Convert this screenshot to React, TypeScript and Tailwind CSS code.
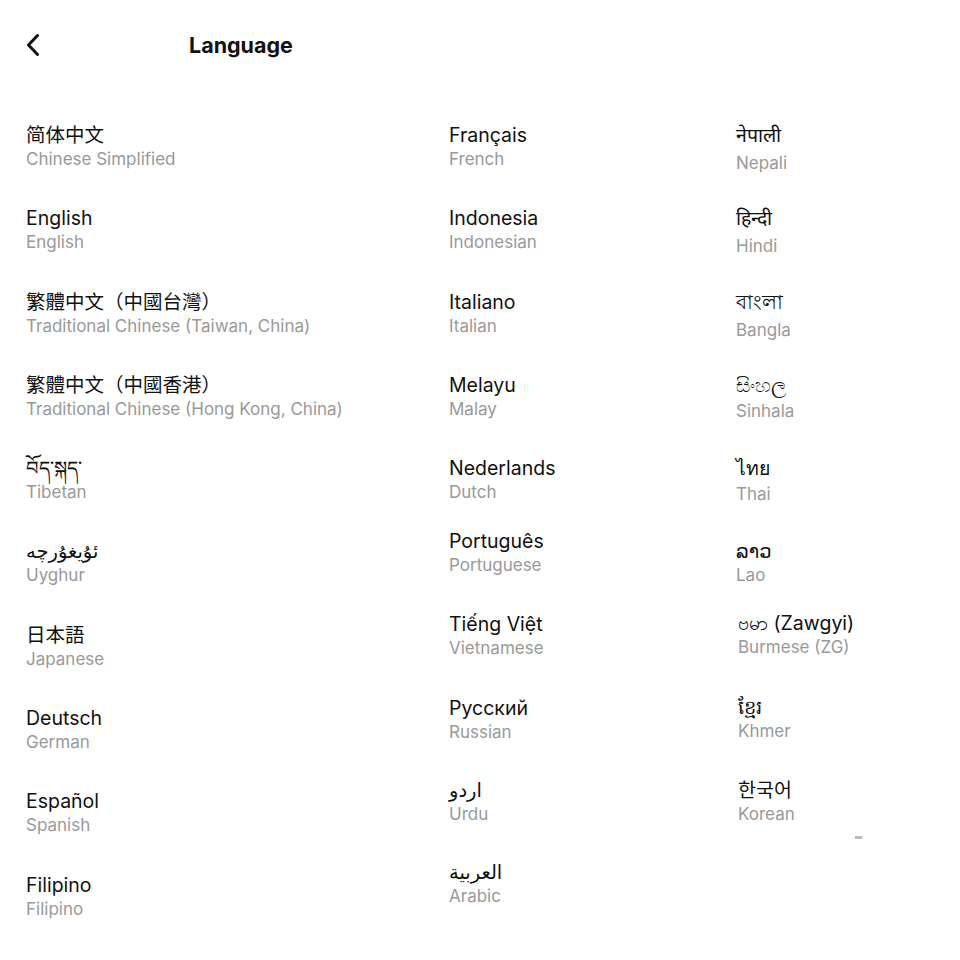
type Lang = { name: string; sub: string; font?: string; h?: string; gap?: string; pad?: boolean }

const col1: Lang[] = [
  { name: '简体中文', sub: 'Chinese Simplified' },
  { name: 'English', sub: 'English' },
  { name: '繁體中文（中國台灣）', sub: 'Traditional Chinese (Taiwan, China)', font: 'tc' },
  { name: '繁體中文（中國香港）', sub: 'Traditional Chinese (Hong Kong, China)', font: 'tc' },
  { name: 'བོད་སྐད་', sub: 'Tibetan' },
  { name: 'ئۇيغۇرچە', sub: 'Uyghur' },
  { name: '日本語', sub: 'Japanese', font: 'jp' },
  { name: 'Deutsch', sub: 'German' },
  { name: 'Español', sub: 'Spanish' },
  { name: 'Filipino', sub: 'Filipino' },
]

const col2: Lang[] = [
  { name: 'Français', sub: 'French' },
  { name: 'Indonesia', sub: 'Indonesian' },
  { name: 'Italiano', sub: 'Italian' },
  { name: 'Melayu', sub: 'Malay' },
  { name: 'Nederlands', sub: 'Dutch', h: 'h-[73px]' },
  { name: 'Português', sub: 'Portuguese' },
  { name: 'Tiếng Việt', sub: 'Vietnamese' },
  { name: 'Русский', sub: 'Russian', h: 'h-[82px]' },
  { name: 'اردو', sub: 'Urdu', h: 'h-[82px]' },
  { name: 'العربية', sub: 'Arabic' },
]

const col3: Lang[] = [
  { name: 'नेपाली', sub: 'Nepali', gap: 'mt-[4px]' },
  { name: 'हिन्दी', sub: 'Hindi', gap: 'mt-[4px]' },
  { name: 'বাংলা', sub: 'Bangla', gap: 'mt-[4px]' },
  { name: 'සිංහල', sub: 'Sinhala', gap: 'mt-[2px]' },
  { name: 'ไทย', sub: 'Thai', gap: 'mt-[2px]' },
  { name: 'ລາວ', sub: 'Lao', h: 'h-[72px]' },
  { name: 'ဗမာ (Zawgyi)', sub: 'Burmese (ZG)', pad: true },
  { name: 'ខ្មែរ', sub: 'Khmer', pad: true },
  { name: '한국어', sub: 'Korean', font: 'kr', pad: true },
]

function Item({ lang }: { lang: Lang }) {
  const fontClass =
    lang.font === 'tc'
      ? "font-['Inter','Noto_Sans_CJK_TC','DejaVu_Sans',sans-serif]"
      : lang.font === 'jp'
        ? "font-['Inter','Noto_Sans_CJK_JP','DejaVu_Sans',sans-serif]"
        : lang.font === 'kr'
          ? "font-['Inter','Noto_Sans_CJK_KR','DejaVu_Sans',sans-serif]"
          : "font-['Inter','Noto_Sans_CJK_SC','DejaVu_Sans',sans-serif]"
  return (
    <div className={`${lang.h ?? 'h-[83.3px]'} flex flex-col ${lang.pad ? 'pl-[2px]' : ''}`}>
      <div className={`text-[19.5px] leading-[24px] text-[#111] whitespace-nowrap ${fontClass}`}>
        {lang.name}
      </div>
      <div className={`text-[17px] leading-[24px] text-[#999] whitespace-nowrap ${lang.gap ?? ''}`}>
        {lang.sub}
      </div>
    </div>
  )
}

export default function App() {
  return (
    <div className="w-[960px] h-[960px] bg-white font-['Inter','Noto_Sans',sans-serif]">
      <header className="h-[90px] flex items-center pl-[26px]">
        <svg width="14" height="22" viewBox="0 0 14 22" fill="none" className="text-[#111]">
          <path d="M11.5 1.5 L2.5 11 L11.5 20.5" stroke="currentColor" strokeWidth="3" strokeLinecap="round" strokeLinejoin="round" />
        </svg>
        <h1 className="ml-[149px] text-[21.5px] font-bold text-[#111]">Language</h1>
      </header>
      <main className="mt-[33px] pl-[26px] grid grid-cols-[423px_287px_1fr]">
        <div>
          {col1.map((l) => (
            <Item key={l.sub} lang={l} />
          ))}
        </div>
        <div>
          {col2.map((l) => (
            <Item key={l.sub} lang={l} />
          ))}
        </div>
        <div>
          {col3.map((l) => (
            <Item key={l.sub} lang={l} />
          ))}
          <div className="ml-[119px] -mt-[25px] w-[7px] h-[3px] bg-[#bbb]" />
        </div>
      </main>
    </div>
  )
}
